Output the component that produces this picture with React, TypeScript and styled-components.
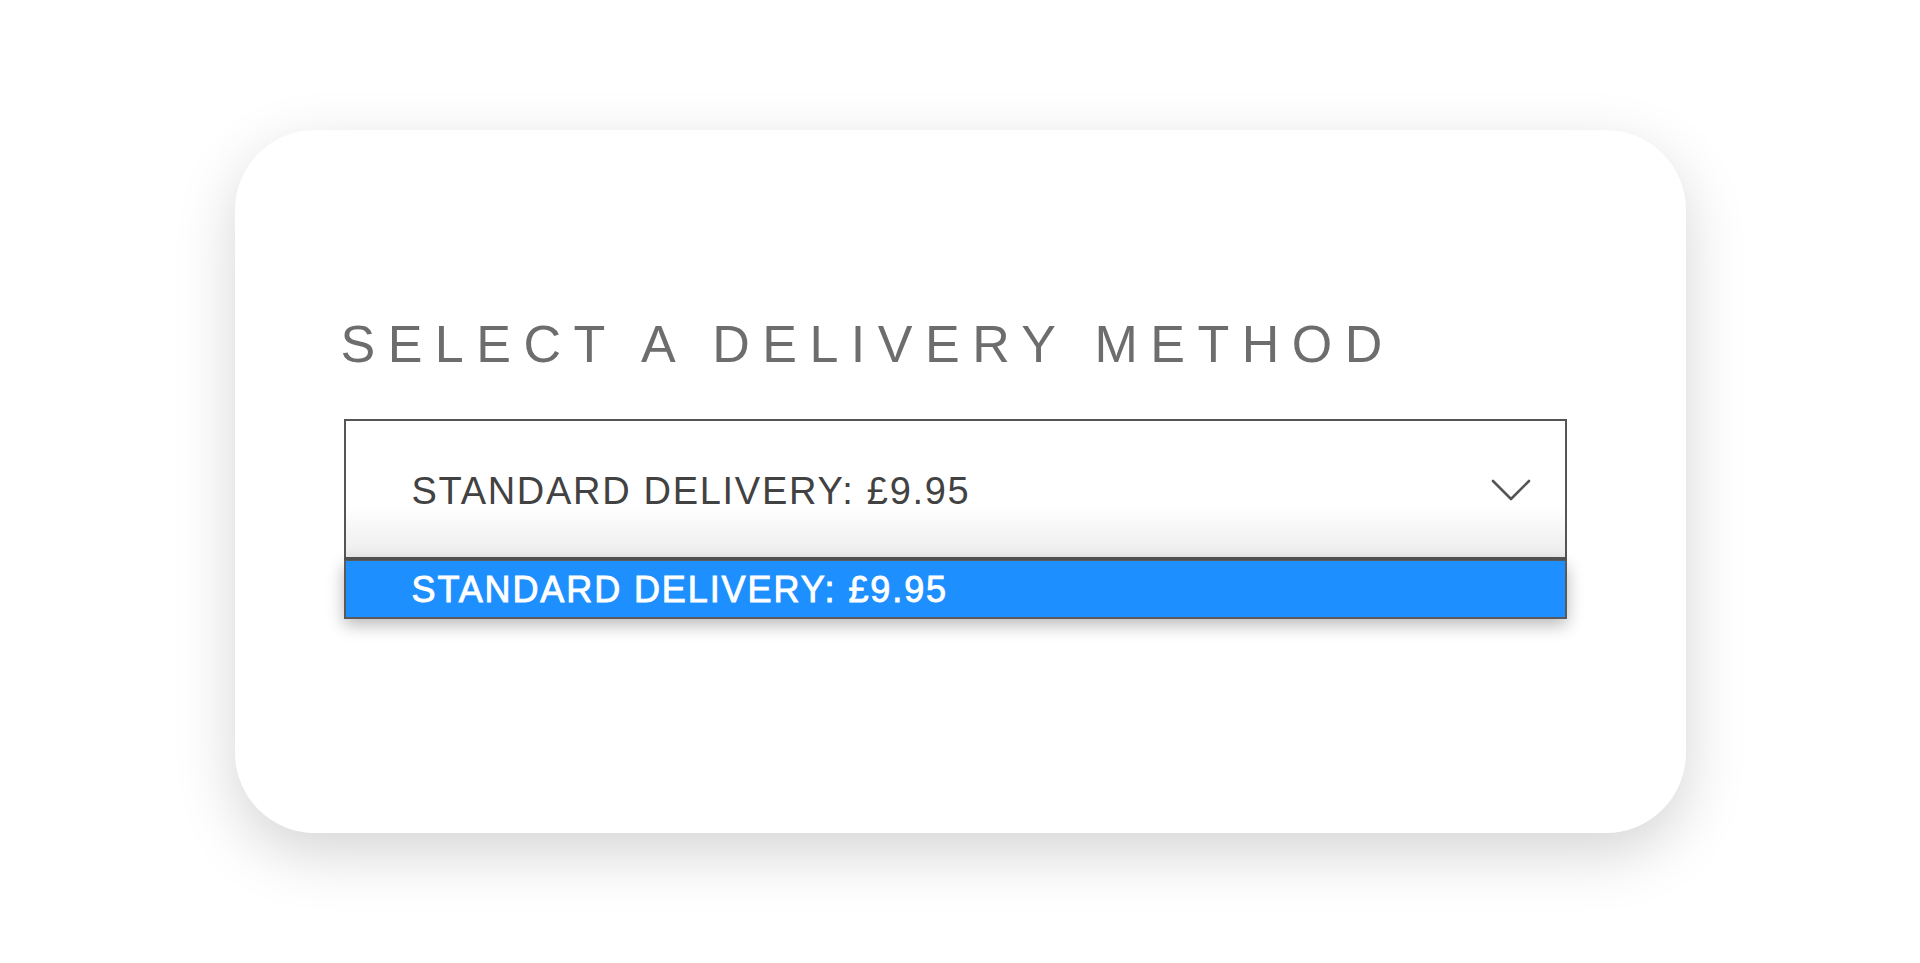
import React, { useState } from "react";
import styled, { createGlobalStyle } from "styled-components";

const GlobalStyle = createGlobalStyle`
  html, body {
    margin: 0;
    padding: 0;
    background: #ffffff;
    font-family: "Liberation Sans", Arial, Helvetica, sans-serif;
  }
`;

const Page = styled.main`
  display: flex;
  align-items: center;
  justify-content: center;
  width: 100%;
  height: 100vh;
`;

const Card = styled.section`
  box-sizing: border-box;
  width: 1451px;
  height: 703px;
  padding: 188px 119px 0 109px;

  background: #ffffff;
  border-radius: 80px;
  box-shadow: 0 20px 60px rgba(0, 0, 0, 0.17);
`;

const Title = styled.h2`
  margin: 0 0 49px -3px;
  font-size: 52px;
  font-weight: 400;
  line-height: 1;
  letter-spacing: 12.5px;
  color: #6d6d6d;
  white-space: nowrap;
`;

const Dropdown = styled.div`
  position: relative;
  width: 100%;
`;

const SelectBox = styled.button`
  box-sizing: border-box;
  display: flex;
  align-items: center;
  justify-content: space-between;
  width: 100%;
  height: 141px;
  padding: 4px 33px 0 66px;

  border: 2px solid #555555;
  border-bottom-width: 3px;
  background: linear-gradient(to bottom, #ffffff 62%, #ececec 100%);
  cursor: pointer;

  font-family: inherit;
  font-size: 38px;
  line-height: 1;
  letter-spacing: 1.7px;
  color: #424242;
  text-align: left;
`;

const Chevron = styled.svg`
  flex: none;
  width: 42px;
  height: 24px;
  margin-top: -2px;
`;

const OptionList = styled.ul`
  position: absolute;
  top: 100%;
  left: 0;
  right: 0;
  box-sizing: border-box;
  margin: 0;
  padding: 0;
  list-style: none;

  border: 2px solid #5a5a5a;
  border-top: 1px solid #5a5a5a;
  box-shadow: 0 6px 16px rgba(0, 0, 0, 0.28);
`;

const Option = styled.li<{ $active: boolean }>`
  display: flex;
  align-items: center;
  height: 54px;
  padding: 2px 0 0 66px;

  background: ${(p) => (p.$active ? "#1e8fff" : "#ffffff")};
  color: ${(p) => (p.$active ? "#ffffff" : "#454545")};
  font-size: 36px;
  line-height: 1;
  letter-spacing: 1.9px;
  -webkit-text-stroke: ${(p) => (p.$active ? "0.9px #ffffff" : "0")};
  cursor: pointer;
`;

const methods = ["STANDARD DELIVERY: £9.95"];

function DeliverySelect() {
  const [selected, setSelected] = useState(0);
  const [open, setOpen] = useState(true);

  return (
    <Dropdown>
      <SelectBox type="button" onClick={() => setOpen(!open)}>
        <span>{methods[selected]}</span>
        <Chevron viewBox="0 0 42 24" fill="none">
          <polyline
            points="3,3 21,21 39,3"
            stroke="#555555"
            strokeWidth="2.6"
            strokeLinecap="round"
            strokeLinejoin="round"
          />
        </Chevron>
      </SelectBox>
      {open && (
        <OptionList>
          {methods.map((label, index) => (
            <Option
              key={label}
              $active={index === selected}
              onClick={() => {
                setSelected(index);
                setOpen(false);
              }}
            >
              {label}
            </Option>
          ))}
        </OptionList>
      )}
    </Dropdown>
  );
}

export default function App() {
  return (
    <>
      <GlobalStyle />
      <Page>
        <Card>
          <Title>SELECT A DELIVERY METHOD</Title>
          <DeliverySelect />
        </Card>
      </Page>
    </>
  );
}
